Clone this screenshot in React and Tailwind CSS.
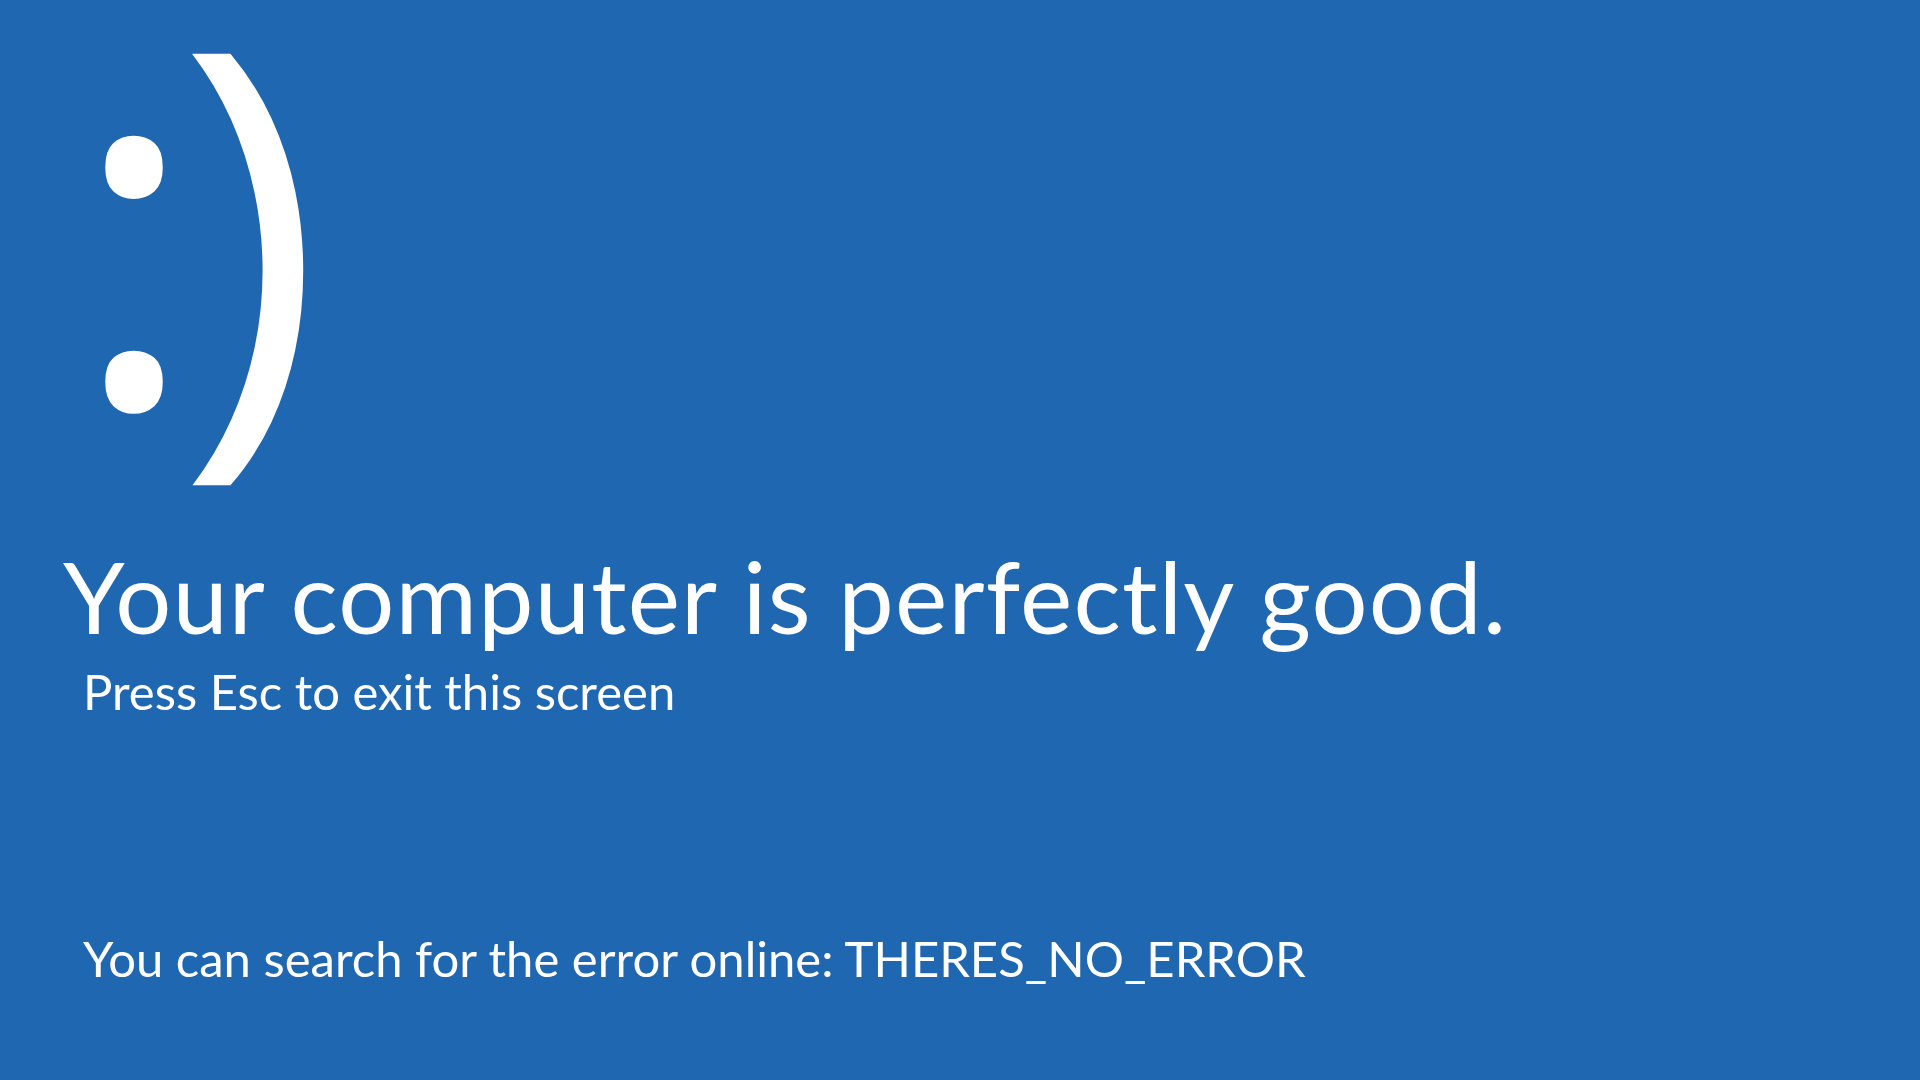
import React from "react";

function App() {
  return (
    <div className="min-h-screen w-full bg-[#2067b2] text-white overflow-hidden font-['Lato',sans-serif]">
      {/* Smiley */}
      <div className="flex items-start h-[431px] pl-[69px] text-[495px] leading-[0.87] font-['Open_Sans',sans-serif] select-none">
        <span className="inline-block tracking-[-22px]">:</span>
        <span className="inline-block">)</span>
      </div>

      {/* Message */}
      <main className="pl-[63px] mt-[115px]">
        <h1 className="text-[99px] leading-none tracking-[1.2px]">Your computer is perfectly good.</h1>
        <p className="pl-[20px] mt-[22px] text-[49px] leading-none">Press Esc to exit this screen</p>
        <p className="pl-[20px] mt-[218px] text-[49px] leading-none">
          You can search for the error online: THERES_NO_ERROR
        </p>
      </main>
    </div>
  );
}

export default App;
